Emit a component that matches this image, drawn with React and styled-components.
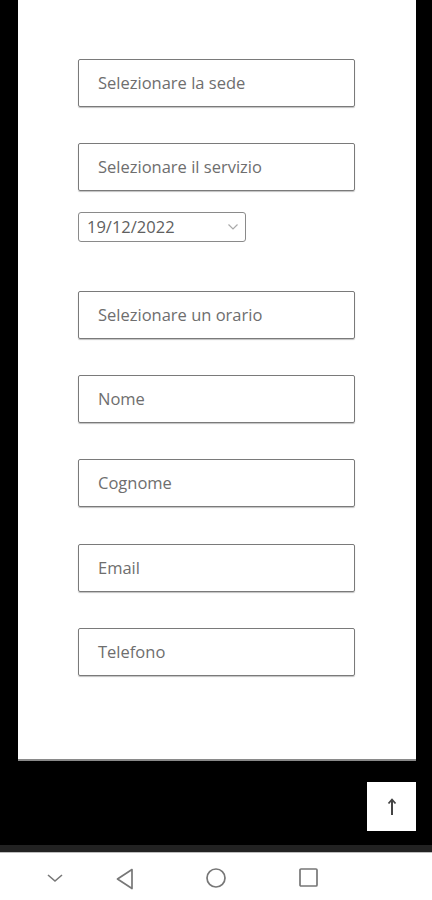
import React from 'react';
import styled, { createGlobalStyle } from 'styled-components';

const GlobalStyle = createGlobalStyle`
  html, body {
    margin: 0;
    padding: 0;
    background: #000;
  }
  * { box-sizing: border-box; }
`;

const Screen = styled.div`
  width: 432px;
  height: 900px;
  display: flex;
  flex-direction: column;
  background: #000;
  font-family: 'Open Sans', 'Noto Sans', sans-serif;
  overflow: hidden;
`;

const Viewport = styled.div`
  flex: 1;
  display: flex;
  flex-direction: column;
  padding-left: 18px;
  padding-right: 16px;
`;

const Panel = styled.div`
  background: #fff;
  padding: 59px 0 83px 60px;
  display: flex;
  flex-direction: column;
  border-bottom: 2px solid #8a8a8a;
`;

const Field = styled.div`
  width: 277px;
  height: 48px;
  border: 1px solid #7a7a7a;
  border-radius: 2px;
  box-shadow: 0 1px 1px rgba(0, 0, 0, 0.25);
  display: flex;
  align-items: center;
  padding: 0 0 2px 19px;
  font-size: 16.5px;
  color: #6e6e6e;
  margin-top: ${p => p.$gap || 0}px;
`;

const DateBox = styled.div`
  width: 168px;
  height: 30px;
  margin-top: 21px;
  border: 1px solid #8a8a8a;
  border-radius: 3px;
  display: flex;
  align-items: center;
  justify-content: space-between;
  padding: 0 6px 1px 8px;
  font-size: 16.5px;
  color: #606060;
`;

const Footer = styled.div`
  display: flex;
  justify-content: flex-end;
  padding-top: 21px;
`;

const TopButton = styled.div`
  width: 49px;
  height: 49px;
  background: #fff;
  display: flex;
  align-items: center;
  justify-content: center;
`;

const Strip = styled.div`
  height: 7px;
  background: #222;
`;

const NavBar = styled.div`
  height: 48px;
  background: #fff;
  border-top: 1px solid #bdbdbd;
  position: relative;
`;

const NavIcon = styled.svg`
  position: absolute;
  left: ${p => p.$x}px;
  top: ${p => p.$y}px;
`;

const fields = [
  { label: 'Selezionare la sede', gap: 0 },
  { label: 'Selezionare il servizio', gap: 36 },
];

const personal = [
  { label: 'Nome', gap: 36 },
  { label: 'Cognome', gap: 36 },
  { label: 'Email', gap: 37 },
  { label: 'Telefono', gap: 36 },
];

export default function App() {
  return (
    <Screen>
      <GlobalStyle />
      <Viewport>
        <Panel>
          {fields.map(f => (
            <Field key={f.label} $gap={f.gap}>{f.label}</Field>
          ))}
          <DateBox>
            <span>19/12/2022</span>
            <svg width="12" height="8" viewBox="0 0 12 8">
              <path d="M1.5 1.5 L6 6 L10.5 1.5" fill="none" stroke="#aaa" strokeWidth="1.2" />
            </svg>
          </DateBox>
          <Field $gap={49}>Selezionare un orario</Field>
          {personal.map(p => (
            <Field key={p.label} $gap={p.gap}>{p.label}</Field>
          ))}
        </Panel>
        <Footer>
          <TopButton>
            <svg width="12" height="20" viewBox="0 0 12 20">
              <path d="M6 18 V3" stroke="#444" strokeWidth="2" />
              <path d="M2.5 6.5 L6 2.5 L9.5 6.5" fill="none" stroke="#444" strokeWidth="1.8" />
            </svg>
          </TopButton>
        </Footer>
      </Viewport>
      <Strip />
      <NavBar>
        <NavIcon $x={46} $y={20} width="18" height="10" viewBox="0 0 18 10">
          <path d="M2 2 L9 8 L16 2" fill="none" stroke="#777" strokeWidth="1.6" />
        </NavIcon>
        <NavIcon $x={114} $y={14} width="22" height="24" viewBox="0 0 22 24">
          <path d="M18 2.5 L3.5 12 L18 21.5 Z" fill="none" stroke="#777" strokeWidth="1.7" strokeLinejoin="round" />
        </NavIcon>
        <NavIcon $x={205} $y={14} width="22" height="22" viewBox="0 0 22 22">
          <circle cx="11" cy="11" r="9" fill="none" stroke="#777" strokeWidth="1.7" />
        </NavIcon>
        <NavIcon $x={298} $y={14} width="22" height="22" viewBox="0 0 22 22">
          <rect x="2" y="2" width="17" height="17" rx="1" fill="none" stroke="#777" strokeWidth="1.7" />
        </NavIcon>
      </NavBar>
    </Screen>
  );
}
